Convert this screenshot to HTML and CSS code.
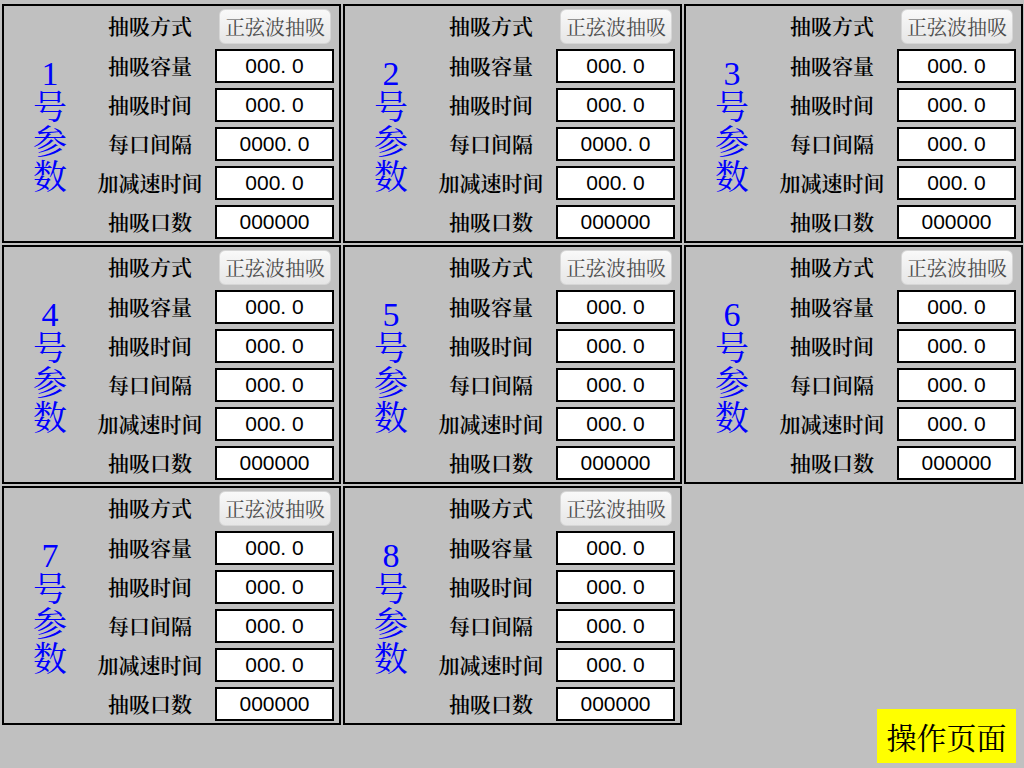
FILE: index.html
```html
<!DOCTYPE html>
<html lang="zh">
<head>
<meta charset="utf-8">
<title>参数设置</title>
<link rel="stylesheet" href="styles.css">
</head>
<body>
<div class="screen">
  <div class="grid">
    <section class="panel">
      <div class="title"><span class="num">1</span><span>号</span><span>参</span><span>数</span></div>
      <div class="form">
        <div class="label">抽吸方式</div><div class="btn">正弦波抽吸</div>
        <div class="label">抽吸容量</div><div class="field">000. 0</div>
        <div class="label">抽吸时间</div><div class="field">000. 0</div>
        <div class="label">每口间隔</div><div class="field">0000. 0</div>
        <div class="label">加减速时间</div><div class="field">000. 0</div>
        <div class="label">抽吸口数</div><div class="field">000000</div>
      </div>
    </section>
    <section class="panel">
      <div class="title"><span class="num">2</span><span>号</span><span>参</span><span>数</span></div>
      <div class="form">
        <div class="label">抽吸方式</div><div class="btn">正弦波抽吸</div>
        <div class="label">抽吸容量</div><div class="field">000. 0</div>
        <div class="label">抽吸时间</div><div class="field">000. 0</div>
        <div class="label">每口间隔</div><div class="field">0000. 0</div>
        <div class="label">加减速时间</div><div class="field">000. 0</div>
        <div class="label">抽吸口数</div><div class="field">000000</div>
      </div>
    </section>
    <section class="panel">
      <div class="title"><span class="num">3</span><span>号</span><span>参</span><span>数</span></div>
      <div class="form">
        <div class="label">抽吸方式</div><div class="btn">正弦波抽吸</div>
        <div class="label">抽吸容量</div><div class="field">000. 0</div>
        <div class="label">抽吸时间</div><div class="field">000. 0</div>
        <div class="label">每口间隔</div><div class="field">000. 0</div>
        <div class="label">加减速时间</div><div class="field">000. 0</div>
        <div class="label">抽吸口数</div><div class="field">000000</div>
      </div>
    </section>
    <section class="panel">
      <div class="title"><span class="num">4</span><span>号</span><span>参</span><span>数</span></div>
      <div class="form">
        <div class="label">抽吸方式</div><div class="btn">正弦波抽吸</div>
        <div class="label">抽吸容量</div><div class="field">000. 0</div>
        <div class="label">抽吸时间</div><div class="field">000. 0</div>
        <div class="label">每口间隔</div><div class="field">000. 0</div>
        <div class="label">加减速时间</div><div class="field">000. 0</div>
        <div class="label">抽吸口数</div><div class="field">000000</div>
      </div>
    </section>
    <section class="panel">
      <div class="title"><span class="num">5</span><span>号</span><span>参</span><span>数</span></div>
      <div class="form">
        <div class="label">抽吸方式</div><div class="btn">正弦波抽吸</div>
        <div class="label">抽吸容量</div><div class="field">000. 0</div>
        <div class="label">抽吸时间</div><div class="field">000. 0</div>
        <div class="label">每口间隔</div><div class="field">000. 0</div>
        <div class="label">加减速时间</div><div class="field">000. 0</div>
        <div class="label">抽吸口数</div><div class="field">000000</div>
      </div>
    </section>
    <section class="panel">
      <div class="title"><span class="num">6</span><span>号</span><span>参</span><span>数</span></div>
      <div class="form">
        <div class="label">抽吸方式</div><div class="btn">正弦波抽吸</div>
        <div class="label">抽吸容量</div><div class="field">000. 0</div>
        <div class="label">抽吸时间</div><div class="field">000. 0</div>
        <div class="label">每口间隔</div><div class="field">000. 0</div>
        <div class="label">加减速时间</div><div class="field">000. 0</div>
        <div class="label">抽吸口数</div><div class="field">000000</div>
      </div>
    </section>
    <section class="panel">
      <div class="title"><span class="num">7</span><span>号</span><span>参</span><span>数</span></div>
      <div class="form">
        <div class="label">抽吸方式</div><div class="btn">正弦波抽吸</div>
        <div class="label">抽吸容量</div><div class="field">000. 0</div>
        <div class="label">抽吸时间</div><div class="field">000. 0</div>
        <div class="label">每口间隔</div><div class="field">000. 0</div>
        <div class="label">加减速时间</div><div class="field">000. 0</div>
        <div class="label">抽吸口数</div><div class="field">000000</div>
      </div>
    </section>
    <section class="panel">
      <div class="title"><span class="num">8</span><span>号</span><span>参</span><span>数</span></div>
      <div class="form">
        <div class="label">抽吸方式</div><div class="btn">正弦波抽吸</div>
        <div class="label">抽吸容量</div><div class="field">000. 0</div>
        <div class="label">抽吸时间</div><div class="field">000. 0</div>
        <div class="label">每口间隔</div><div class="field">000. 0</div>
        <div class="label">加减速时间</div><div class="field">000. 0</div>
        <div class="label">抽吸口数</div><div class="field">000000</div>
      </div>
    </section>
  </div>
  <div class="nav-btn">操作页面</div>
</div>
</body>
</html>
```

FILE: styles.css
```css
html, body {
  margin: 0;
  padding: 0;
  background: #c0c0c0;
}

.screen {
  position: relative;
  width: 1024px;
  height: 768px;
  overflow: hidden;
  background: #c0c0c0;
  font-family: "Noto Serif CJK SC", "Noto Sans CJK SC", sans-serif;
}

.grid {
  display: grid;
  grid-template-columns: repeat(3, 339px);
  grid-template-rows: repeat(3, 239px);
  column-gap: 2px;
  row-gap: 2px;
  padding: 4px 0 0 2px;
}

.panel {
  box-sizing: border-box;
  border: 2px solid #000;
  display: flex;
}

.title {
  width: 92px;
  display: flex;
  flex-direction: column;
  align-items: center;
  justify-content: center;
  padding-top: 4px;
  box-sizing: border-box;
  color: #0000ff;
  font-size: 34px;
  line-height: 35px;
}

.title span {
  display: block;
  height: 35px;
}

.title .num {
  font-family: "Liberation Serif", serif;
  font-size: 34px;
  line-height: 30px;
  height: 28px;
}

.form {
  display: grid;
  grid-template-columns: 108px 119px;
  grid-template-rows: 35px repeat(5, 34px);
  column-gap: 11px;
  row-gap: 5px;
  padding-top: 3px;
}

.label {
  align-self: center;
  text-align: center;
  white-space: nowrap;
  font-size: 21px;
  line-height: 24px;
  margin-top: -3px;
  font-weight: 600;
  color: #000;
}

.field {
  box-sizing: border-box;
  border: 2px solid #000;
  background: #fff;
  display: flex;
  align-items: center;
  justify-content: center;
  font-family: "Liberation Sans", sans-serif;
  font-size: 21px;
  color: #000;
  white-space: pre;
}

.btn {
  box-sizing: border-box;
  width: 112px;
  margin-left: 4px;
  border: 1px solid #d6d6d6;
  border-radius: 6px;
  background: linear-gradient(#f9f9f9, #e6e6e6);
  display: flex;
  align-items: center;
  justify-content: center;
  font-size: 20px;
  color: #4a4a4a;
  white-space: nowrap;
}

.nav-btn {
  position: absolute;
  right: 8px;
  bottom: 5px;
  width: 139px;
  height: 54px;
  background: #ffff00;
  display: flex;
  align-items: center;
  justify-content: center;
  font-size: 30px;
  color: #000;
}
```
